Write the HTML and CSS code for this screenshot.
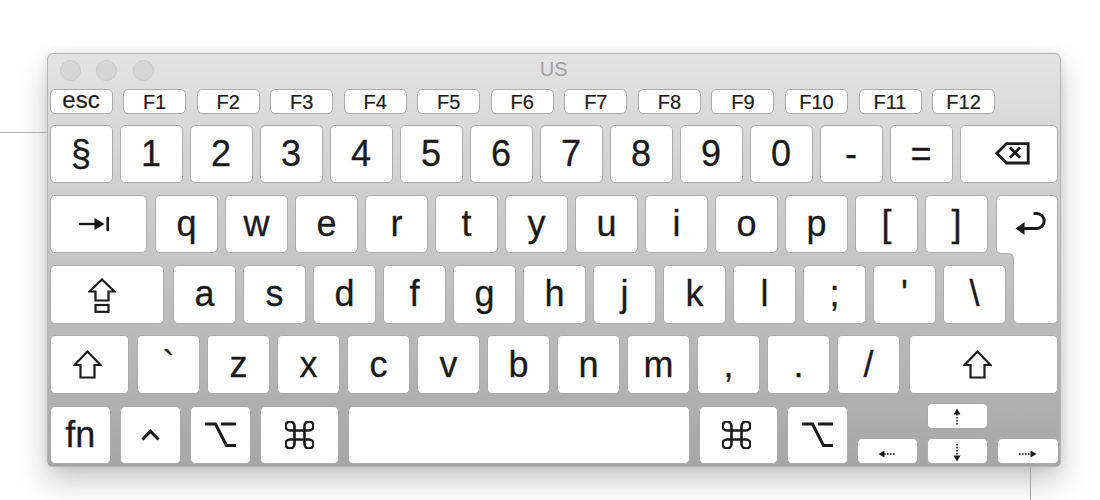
FILE: index.html
```html
<!DOCTYPE html>
<html lang="en">
<head>
<meta charset="utf-8">
<title>Keyboard Viewer</title>
<link rel="stylesheet" href="styles.css">
</head>
<body>
<div class="stage">
  <div class="window">
    <div class="titlebar">
      <div class="lights"><span class="light"></span><span class="light"></span><span class="light"></span></div>
      <div class="title">US</div>
      <div></div>
    </div>
    <div class="frow">
      <div class="fk esc">esc</div>
      <div class="fk">F1</div><div class="fk">F2</div><div class="fk">F3</div><div class="fk">F4</div>
      <div class="fk">F5</div><div class="fk">F6</div><div class="fk">F7</div><div class="fk">F8</div>
      <div class="fk">F9</div><div class="fk">F10</div><div class="fk">F11</div><div class="fk">F12</div>
    </div>
    <div class="keys">
      <div class="row">
        <div class="k">§</div><div class="k">1</div><div class="k">2</div><div class="k">3</div><div class="k">4</div>
        <div class="k">5</div><div class="k">6</div><div class="k">7</div><div class="k">8</div><div class="k">9</div>
        <div class="k">0</div><div class="k">-</div><div class="k">=</div>
        <div class="k w-bs">
          <svg class="ico" width="35" height="23" viewBox="0 0 35 23"><path d="M1.8 11.3 L11.5 1.6 H33.2 V21 H11.5 Z" fill="none" stroke="#1a1a1a" stroke-width="2.8" stroke-linejoin="miter"/><path d="M15 5.6 L25 15.8 M25 5.6 L15 15.8" stroke="#1a1a1a" stroke-width="2.8"/></svg>
        </div>
      </div>
      <div class="row">
        <div class="k w-tab">
          <svg class="ico" width="31" height="16" viewBox="0 0 31 16"><path d="M0 8 H18" stroke="#1a1a1a" stroke-width="2.4"/><path d="M15.5 2 L25.5 8 L15.5 14 Z" fill="#1a1a1a"/><rect x="27.4" y="0.8" width="2.6" height="14.4" fill="#1a1a1a"/></svg>
        </div>
        <div class="k">q</div><div class="k">w</div><div class="k">e</div><div class="k">r</div><div class="k">t</div>
        <div class="k">y</div><div class="k">u</div><div class="k">i</div><div class="k">o</div><div class="k">p</div>
        <div class="k">[</div><div class="k">]</div>
        <svg class="ret" width="62" height="129" viewBox="0 0 62 129"><path d="M5.5 0.5 H56.5 Q61.5 0.5 61.5 5.5 V123.5 Q61.5 128.5 56.5 128.5 H22.5 Q17.5 128.5 17.5 123.5 V64 Q17.5 58.5 12 58.5 H5.5 Q0.5 58.5 0.5 53.5 V5.5 Q0.5 0.5 5.5 0.5 Z" fill="#fff" stroke="#ababab"/><path d="M26 33.5 H40.7 A7.5 7.5 0 0 0 40.7 18.5 H37.5" fill="none" stroke="#1a1a1a" stroke-width="3"/><path d="M19.5 33.5 L28.5 27 L28.5 40 Z" fill="#1a1a1a"/></svg>
      </div>
      <div class="row">
        <div class="k w-caps">
          <svg class="ico caps" width="28" height="35" viewBox="0 0 28 35"><path d="M14 1.5 L26.5 13.5 H20.5 V22.5 H7.5 V13.5 H1.5 Z" fill="none" stroke="#1a1a1a" stroke-width="2.2" stroke-linejoin="miter"/><rect x="7.5" y="27" width="13" height="6.8" fill="none" stroke="#1a1a1a" stroke-width="2.2"/></svg>
        </div>
        <div class="k">a</div><div class="k">s</div><div class="k">d</div><div class="k">f</div><div class="k">g</div>
        <div class="k">h</div><div class="k">j</div><div class="k">k</div><div class="k">l</div><div class="k">;</div>
        <div class="k">'</div><div class="k">\</div>
      </div>
      <div class="row">
        <div class="k w-lshift">
          <svg class="ico" width="29" height="29" viewBox="0 0 29 29"><path d="M14.5 1.5 L27.5 15 H21.5 V27.5 H7.5 V15 H1.5 Z" fill="none" stroke="#1a1a1a" stroke-width="2.2" stroke-linejoin="miter"/></svg>
        </div>
        <div class="k grave">`</div><div class="k">z</div><div class="k">x</div><div class="k">c</div><div class="k">v</div>
        <div class="k">b</div><div class="k">n</div><div class="k">m</div><div class="k">,</div><div class="k">.</div>
        <div class="k">/</div>
        <div class="k w-rshift">
          <svg class="ico" width="29" height="29" viewBox="0 0 29 29"><path d="M14.5 1.5 L27.5 15 H21.5 V27.5 H7.5 V15 H1.5 Z" fill="none" stroke="#1a1a1a" stroke-width="2.2" stroke-linejoin="miter"/></svg>
        </div>
      </div>
      <div class="row r5">
        <div class="k w-fn">fn</div>
        <div class="k w-mod">
          <svg class="ico" width="19" height="12" viewBox="0 0 19 12"><path d="M1.5 10.5 L9.5 2.2 L17.5 10.5" fill="none" stroke="#1a1a1a" stroke-width="3"/></svg>
        </div>
        <div class="k w-mod">
          <svg class="ico" width="31" height="26" viewBox="0 0 31 26"><path d="M0 2 H10.5 L21.5 23.5 H31 M16 2 H31" fill="none" stroke="#1a1a1a" stroke-width="3"/></svg>
        </div>
        <div class="k w-cmd">
          <svg class="ico" width="29" height="28" viewBox="0 0 29 28"><path d="M9.5 9.5 H19.5 V18.5 H9.5 Z M9.5 9.5 V5 A4.5 4.5 0 1 0 5 9.5 H9.5 M19.5 9.5 V5 A4.5 4.5 0 1 1 24 9.5 H19.5 M9.5 18.5 V23 A4.5 4.5 0 1 1 5 18.5 H9.5 M19.5 18.5 V23 A4.5 4.5 0 1 0 24 18.5 H19.5" fill="none" stroke="#1a1a1a" stroke-width="2.6"/></svg>
        </div>
        <div class="k w-space"></div>
        <div class="k w-cmd cmd-r">
          <svg class="ico" width="29" height="28" viewBox="0 0 29 28"><path d="M9.5 9.5 H19.5 V18.5 H9.5 Z M9.5 9.5 V5 A4.5 4.5 0 1 0 5 9.5 H9.5 M19.5 9.5 V5 A4.5 4.5 0 1 1 24 9.5 H19.5 M9.5 18.5 V23 A4.5 4.5 0 1 1 5 18.5 H9.5 M19.5 18.5 V23 A4.5 4.5 0 1 0 24 18.5 H19.5" fill="none" stroke="#1a1a1a" stroke-width="2.6"/></svg>
        </div>
        <div class="k w-mod">
          <svg class="ico" width="31" height="26" viewBox="0 0 31 26"><path d="M0 2 H10.5 L21.5 23.5 H31 M16 2 H31" fill="none" stroke="#1a1a1a" stroke-width="3"/></svg>
        </div>
        <div class="arrows">
          <div class="ak up">
            <svg width="8" height="18" viewBox="0 0 8 18"><path d="M0.5 6.5 L4 0.5 L7.5 6.5 Z" fill="#1a1a1a"/><path d="M4 6 V18" stroke="#1a1a1a" stroke-width="1.6" stroke-dasharray="1.6 1.4"/></svg>
          </div>
          <div class="ak left">
            <svg width="18" height="8" viewBox="0 0 18 8"><path d="M6.5 0.5 L0.5 4 L6.5 7.5 Z" fill="#1a1a1a"/><path d="M6 4 H18" stroke="#1a1a1a" stroke-width="1.6" stroke-dasharray="1.6 1.4"/></svg>
          </div>
          <div class="ak down">
            <svg width="8" height="18" viewBox="0 0 8 18"><path d="M4 0 V12" stroke="#1a1a1a" stroke-width="1.6" stroke-dasharray="1.6 1.4"/><path d="M0.5 11.5 L4 17.5 L7.5 11.5 Z" fill="#1a1a1a"/></svg>
          </div>
          <div class="ak right">
            <svg width="18" height="8" viewBox="0 0 18 8"><path d="M0 4 H12" stroke="#1a1a1a" stroke-width="1.6" stroke-dasharray="1.6 1.4"/><path d="M11.5 0.5 L17.5 4 L11.5 7.5 Z" fill="#1a1a1a"/></svg>
          </div>
        </div>
      </div>
    </div>
  </div>
</div>
</body>
</html>
```

FILE: styles.css
```css
* { box-sizing: border-box; }

html, body {
  margin: 0;
  padding: 0;
  background: #ffffff;
}

body {
  font-family: "Liberation Sans", Arial, Helvetica, sans-serif;
  color: #1a1a1a;
}

.stage {
  position: relative;
  width: 1100px;
  height: 500px;
  padding: 53px 0 0 47px;
  overflow: hidden;
}

/* connector lines drawn outside the window */
.stage::before {
  content: "";
  position: absolute;
  left: 0;
  top: 132px;
  width: 47px;
  height: 1px;
  background: #b0b0b0;
}

.stage::after {
  content: "";
  position: absolute;
  left: 1030px;
  top: 467px;
  width: 1px;
  height: 33px;
  background: #a3a3a3;
}

.window {
  width: 1014px;
  height: 414px;
  border: 1px solid #b4b4b4;
  border-radius: 6px 6px 5px 5px;
  background: linear-gradient(to bottom, #e3e3e3 0px, #dddddd 40px, #a6a6a6 100%);
  box-shadow: 0 14px 30px rgba(0, 0, 0, 0.22), 0 0 12px rgba(0, 0, 0, 0.08);
  padding: 0 2px 0 1.5px;
}

.titlebar {
  height: 35px;
  display: grid;
  grid-template-columns: 1fr auto 1fr;
  align-items: start;
}

.lights {
  display: flex;
  gap: 15.2px;
  padding: 5.5px 0 0 10.8px;
}

.light {
  width: 21px;
  height: 21px;
  border-radius: 50%;
  background: #d6d6d6;
  border: 1px solid #c8c8c8;
}

.title {
  font-size: 20px;
  line-height: 23px;
  padding-top: 3.5px;
  color: #9f9f9f;
}

.frow {
  display: flex;
  gap: 10.55px;
  height: 25px;
  margin-bottom: 10.5px;
}

.fk {
  width: 63px;
  height: 25px;
  flex: none;
  background: #ffffff;
  border: 1px solid #ababab;
  border-radius: 5px;
  display: flex;
  align-items: center;
  justify-content: center;
  font-size: 20px;
  line-height: 1;
  -webkit-text-stroke: 0.2px #1a1a1a;
}

.fk.esc {
  font-size: 24px;
  padding-bottom: 3px;
}

.keys {
  display: flex;
  flex-direction: column;
  gap: 11.75px;
}

.row {
  display: flex;
  gap: 7px;
  align-items: flex-start;
}

.k {
  width: 63px;
  height: 58.5px;
  flex: none;
  background: #ffffff;
  border: 1px solid #ababab;
  border-radius: 5px;
  display: flex;
  align-items: center;
  justify-content: center;
  font-size: 36px;
  line-height: 1;
  -webkit-text-stroke: 0.3px #1a1a1a;
}

.ico { display: block; }

.w-bs { width: 98.5px; padding-left: 8px; }
.w-tab { width: 97.5px; margin-right: 1px; padding-right: 7px; }
.w-caps { width: 114.5px; margin-right: 2px; padding-right: 10px; }
.w-lshift { width: 79.5px; margin-right: 1px; padding-right: 4px; }
.w-rshift { width: 149px; margin-left: 1.5px; padding-right: 12px; }

.ret {
  display: block;
  flex: none;
  margin-left: 1px;
  margin-bottom: -70.5px;
}

.caps { margin-top: 2px; }

.r5 { gap: 9px; }
.w-fn { width: 61.5px; }
.w-mod { width: 61px; }
.w-cmd { width: 79px; }
.cmd-r { padding-right: 4px; }
.w-space { width: 341.5px; }

.arrows {
  width: 202px;
  margin-top: -3px;
  display: grid;
  grid-template-columns: 61px 61px 62px;
  grid-template-rows: 26px 26px;
  column-gap: 9px;
  row-gap: 9.5px;
  grid-template-areas:
    ". up ."
    "left down right";
}

.ak {
  background: #ffffff;
  border: 1px solid #ababab;
  border-radius: 5px;
  display: flex;
  align-items: center;
  justify-content: center;
}

.ak svg { display: block; }

.ak.up { grid-area: up; padding-top: 3px; }
.ak.down { grid-area: down; padding-top: 4px; }
.ak.left { grid-area: left; padding-top: 5px; }
.ak.right { grid-area: right; padding-top: 5px; }
```
